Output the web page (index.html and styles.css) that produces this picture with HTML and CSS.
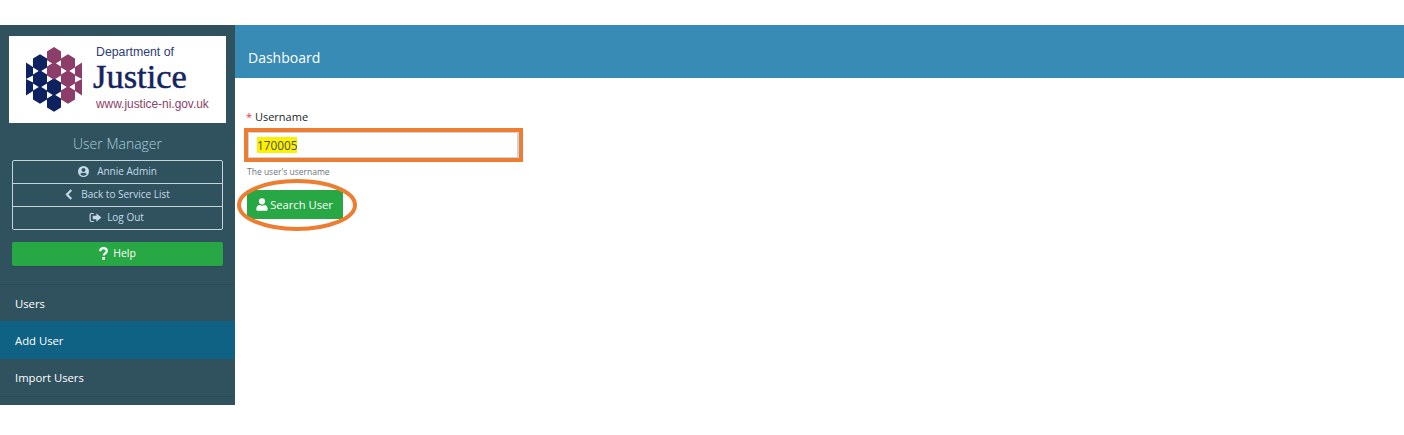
FILE: index.html
```html
<!DOCTYPE html>
<html lang="en">
<head>
<meta charset="utf-8">
<title>Add User</title>
<link rel="stylesheet" href="styles.css">
</head>
<body>
<div class="app">
  <aside class="sidebar">
    <div class="logo">
      <svg class="hexes" width="56" height="65" viewBox="0 0 56 65">
        <defs>
          <path id="hex" d="M0-8.800 7-4.400V4.400L0 8.800-7 4.400V-4.400Z"/>
        </defs>
        <g fill="#0e2260">
          <path d="M0 15.500 7 20V28.500L0 32Z"/><path d="M0 32 7 35.500V44L0 48.500Z"/>
          <use href="#hex" x="14" y="16"/><use href="#hex" x="14" y="32"/><use href="#hex" x="14" y="48"/>
          <use href="#hex" x="28" y="40"/><use href="#hex" x="28" y="56"/>
        </g>
        <g fill="#8d3d69">
          <use href="#hex" x="28" y="8.800"/><use href="#hex" x="28" y="24"/>
          <use href="#hex" x="42" y="16"/><use href="#hex" x="42" y="32"/><use href="#hex" x="42" y="48"/>
          <path d="M56 15.500 49 20V28.500L56 32Z"/><path d="M56 32 49 35.500V44L56 48.500Z"/>
        </g>
      </svg>
      <div class="logo-text">
        <div class="logo-dept">Department of</div>
        <div class="logo-name">Justice</div>
        <div class="logo-url">www.justice-ni.gov.uk</div>
      </div>
    </div>
    <h1 class="app-title">User Manager</h1>
    <div class="user-box">
      <a class="user-row">
        <svg class="ico" width="11" height="11" viewBox="0 0 24 24"><path fill="#c3dbe8" fill-rule="evenodd" d="M12 0a12 12 0 1 0 0 24 12 12 0 0 0 0-24Zm0 4.600a4.300 4.300 0 1 1 0 8.600 4.300 4.300 0 0 1 0-8.600Zm0 16.600a9.200 9.200 0 0 1-7-3.300c.9-1.800 2.700-3 4.700-3 .2 0 .4 0 .6.100.5.200 1.100.300 1.700.300s1.200-.100 1.700-.300c.2-.100.4-.100.6-.100 2 0 3.800 1.200 4.700 3a9.200 9.200 0 0 1-7 3.300Z"/></svg>
        <span>Annie Admin</span>
      </a>
      <a class="user-row">
        <svg class="ico" width="8" height="11" viewBox="0 0 8 12"><path fill="none" stroke="#c3dbe8" stroke-width="2.400" d="M6.500 1.200 1.800 6l4.700 4.800"/></svg>
        <span>Back to Service List</span>
      </a>
      <a class="user-row tight">
        <svg class="ico" width="13" height="11" viewBox="0 0 14 12"><path fill="#c3dbe8" d="M5 1H2.500A2 2 0 0 0 .5 3v6a2 2 0 0 0 2 2H5V9.700H2.800a1 1 0 0 1-1-1V3.300a1 1 0 0 1 1-1H5ZM8 1.500v2.700H4v3.600h4v2.700L13.500 6Z"/></svg>
        <span>Log Out</span>
      </a>
    </div>
    <a class="help-btn">
      <svg class="ico" width="9" height="13" viewBox="0 0 9 13"><path fill="none" stroke="#fff" stroke-width="2.200" d="M1.200 4.200C1.300 2.300 2.700 1.200 4.500 1.200c1.900 0 3.300 1.100 3.300 2.800 0 2.300-3.100 2.400-3.100 4.600"/><rect x="3.300" y="10" width="2.700" height="2.700" fill="#fff"/></svg>
      <span>Help</span>
    </a>
    <nav class="menu">
      <a class="menu-item">Users</a>
      <a class="menu-item active">Add User</a>
      <a class="menu-item">Import Users</a>
    </nav>
  </aside>
  <main class="content">
    <header class="page-head">Dashboard</header>
    <form class="form">
      <label class="field-label"><span class="req">*</span> Username</label>
      <div class="input-mark">
        <div class="input"><span class="hl">170005</span></div>
      </div>
      <div class="hint">The user's username</div>
      <div class="btn-mark">
        <a class="search-btn">
          <svg class="ico" width="12" height="13" viewBox="0 0 12 13"><circle cx="6" cy="3.300" r="3.100" fill="#fff"/><path fill="#fff" d="M.3 11.200C.3 8.700 1.800 7 3.500 6.900c1.500 1 3.500 1 5 0 1.700.1 3.200 1.800 3.200 4.300 0 1-.7 1.600-1.600 1.600H1.900c-.9 0-1.600-.6-1.600-1.600Z"/></svg>
          <span>Search User</span>
        </a>
        <svg class="ellipse" width="120" height="52" viewBox="0 0 120 52"><ellipse cx="60" cy="26" rx="58" ry="24" fill="none" stroke="#ed7d31" stroke-width="4"/></svg>
      </div>
    </form>
  </main>
</div>
</body>
</html>
```
FILE: styles.css
```css
* { box-sizing: border-box; }
html, body { margin: 0; padding: 0; background: #fff; }
body { font-family: "Open Sans", "Noto Sans", "Liberation Sans", sans-serif; }
.app { display: flex; margin-top: 25px; height: 380px; }
.sidebar { width: 235px; flex: none; background: #30525e; padding-top: 11px; display: flex; flex-direction: column; }
.logo { margin: 0 9px; width: 217px; height: 87px; background: #fff; display: flex; padding: 11px 0 0 17px; flex: none; }
.hexes { flex: none; }
.logo-text { margin-left: 11px; }
.logo-dept { font: 12.300px/14px "Liberation Sans", sans-serif; margin-left: 3px; margin-top: -2px; color: #2c3c78; }
.logo-name { font: 400 34.500px/32px "Liberation Serif", serif; color: #14245f; margin-top: 1px; -webkit-text-stroke: .5px #14245f; }
.logo-url { font: 11.900px/14px "Liberation Sans", sans-serif; color: #8a4069; margin: 5px 0 0 3px; white-space: nowrap; }
.app-title { margin: 11px 0 6px; font-size: 14px; line-height: 20px; font-weight: 300; color: #a9cddd; text-align: center; }
.user-box { margin: 0 12px; width: 211px; border: 1px solid #c4d4dc; border-radius: 2px; }
.user-row { display: flex; align-items: center; justify-content: center; gap: 8px; height: 23px; padding-bottom: 2px; font-size: 10px; color: #c3dbe8; border-bottom: 1px solid #c4d4dc; }
.user-row:last-child { border-bottom: 0; height: 22px; }
.user-row.tight { gap: 5px; margin-left: -2px; }
.ico { flex: none; display: block; }
.help-btn { margin: 12px 12px 0; width: 211px; height: 24px; padding-bottom: 2px; background: #28a745; border-radius: 2px; color: #fff; display: flex; align-items: center; justify-content: center; gap: 5px; font-size: 10.500px; box-shadow: 0 1px 1px rgba(0,0,0,.12); }
.menu { margin-top: 18px; border-top: 1px solid #2c4a55; border-bottom: 1px solid #2c4a55; }
.menu-item { display: flex; align-items: center; height: 36px; padding-left: 15px; color: #fff; font-size: 11.300px; }
.menu-item.active { background: #0f6283; height: 38px; }
.menu-item:last-child { height: 37px; }
.content { flex: 1; min-width: 0; }
.page-head { height: 53px; background: #378bb5; color: #fff; font-size: 14px; line-height: 20px; padding: 23px 0 0 13px; }
.form { padding: 31px 0 0 12px; }
.field-label { display: block; margin-left: -1px; font-size: 11px; line-height: 16px; color: #212529; }
.req { color: #dc3545; }
.input-mark { margin: 3px 0 0 -3px; width: 279px; height: 34px; border: 4px solid #ed7d31; }
.input { width: 271px; height: 26px; background: #fff; border: 1px solid #ced4da; border-right-width: 2px; padding: 4px 0 0 8px; font-size: 11.800px; line-height: 16px; color: #495057; }
.hl { display: inline-block; height: 16px; background: #fdf000; line-height: 17px; }
.hint { margin-top: 4px; font-size: 8.500px; line-height: 12px; color: #6c757d; }
.btn-mark { position: relative; margin-top: 12px; width: 96px; }
.search-btn { display: flex; align-items: center; justify-content: center; gap: 2px; height: 29px; width: 96px; padding-right: 1px; background: #28a745; color: #fff; font-size: 11.200px; }
.ellipse { position: absolute; left: -10px; top: -11px; }
```
